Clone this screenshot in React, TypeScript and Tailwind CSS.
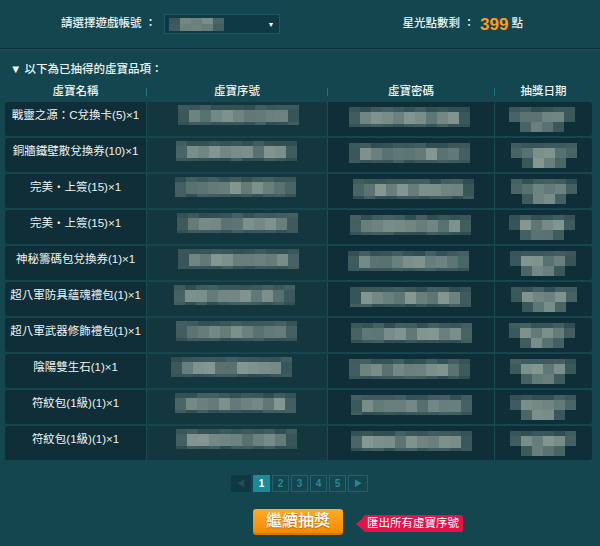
import React from "react";

type MRow = { h: number; n: number; off: number; dim?: boolean };

function Mosaic({ spec, seed, cell = 11 }: { spec: MRow[]; seed: number; cell?: number }) {
  let s = seed * 7919 + 17;
  const rnd = () => {
    s = (s * 9301 + 49297) % 233280;
    return s / 233280;
  };
  const mix = (t: number) => {
    const a = [34, 66, 72];
    const b = [138, 156, 150];
    const c = a.map((v, i) => Math.round(v + (b[i] - v) * t));
    return `rgb(${c[0]},${c[1]},${c[2]})`;
  };
  return (
    <div className="flex flex-col">
      {spec.map((r, i) => (
        <div key={i} className="flex" style={{ height: r.h, marginLeft: r.off * cell }}>
          {Array.from({ length: r.n }).map((_, j) => {
            const edge = j === 0 || j === r.n - 1;
            let t: number;
            if (r.dim) t = 0.12 + rnd() * 0.22;
            else if (edge) t = 0.2 + rnd() * 0.2;
            else t = 0.5 + rnd() * 0.45;
            return <div key={j} style={{ width: cell, background: mix(t) }} />;
          })}
        </div>
      ))}
    </div>
  );
}

const serialSpec: MRow[] = [
  { h: 5, n: 11, off: 0, dim: true },
  { h: 12, n: 11, off: 0 },
  { h: 3, n: 11, off: 0, dim: true },
];

const dateSpec: MRow[] = [
  { h: 5, n: 6, off: 0, dim: true },
  { h: 10, n: 6, off: 0 },
  { h: 10, n: 4, off: 1 },
];

const rows = [
  { name: "戰靈之源：C兌換卡(5)×1", a: 31, b: 21, c: 14 },
  { name: "銅牆鐵壁散兌換券(10)×1", a: 29, b: 21, c: 16 },
  { name: "完美・上簽(15)×1", a: 28, b: 25, c: 16 },
  { name: "完美・上簽(15)×1", a: 30, b: 22, c: 14 },
  { name: "神秘籌碼包兌換券(1)×1", a: 31, b: 20, c: 15 },
  { name: "超八軍防具蘊魂禮包(1)×1", a: 27, b: 22, c: 16 },
  { name: "超八軍武器修飾禮包(1)×1", a: 29, b: 23, c: 14 },
  { name: "陰陽雙生石(1)×1", a: 24, b: 21, c: 15 },
  { name: "符紋包(1級)(1)×1", a: 28, b: 23, c: 15 },
  { name: "符紋包(1級)(1)×1", a: 29, b: 23, c: 15 },
];

export default function App() {
  return (
    <div className="w-[600px] h-[546px] overflow-hidden bg-[#13464f] text-[#eef4f4] font-['Liberation_Sans','Noto_Sans_CJK_TC',sans-serif] pt-[14px]">
      {/* top row */}
      <div className="flex items-center h-[20px] text-[11.5px] font-medium">
        <span className="ml-[61px]">請選擇遊戲帳號</span>
        <span className="ml-[3px] w-[12px] text-center">：</span>
        <div className="ml-[7px] w-[116px] h-[20px] border border-[#1d5863] bg-[#0e3a44] flex items-center pl-[4px]">
          <div className="pt-[1px]">
            <Mosaic spec={[{ h: 6, n: 5, off: 0 }, { h: 7, n: 5, off: 0 }]} seed={3} />
          </div>
          <span className="ml-auto mr-[4px] text-[7px] text-white leading-none">▼</span>
        </div>
        <span className="ml-[123px]">星光點數剩</span>
        <span className="ml-[3px] w-[12px] text-center">：</span>
        <span className="ml-[5px] text-[17px] font-bold text-[#ff9a1c] leading-none">399</span>
        <span className="ml-[3px]">點</span>
      </div>

      {/* divider */}
      <div className="mt-[14px] h-px bg-[#0b2f37]" />
      <div className="h-px bg-[#17505b]" />

      {/* title */}
      <div className="mt-[11px] ml-[10px] text-[11.5px] leading-[16px] font-medium">▼ 以下為已抽得的虛寶品項：</div>

      {/* header */}
      <div className="mt-[6px] ml-[5px] grid grid-cols-[141px_1px_180px_1px_166px_1px_97px] items-center h-[16px] text-[11.5px] font-medium">
        <div className="text-center">虛寶名稱</div>
        <div className="h-[8px] bg-[#1f7682]" />
        <div className="text-center">虛寶序號</div>
        <div className="h-[8px] bg-[#1f7682]" />
        <div className="text-center">虛寶密碼</div>
        <div className="h-[8px] bg-[#1f7682]" />
        <div className="text-center">抽獎日期</div>
      </div>

      {/* rows */}
      <div className="mt-[3px] ml-[5px] w-[587px] flex flex-col gap-[2px]">
        {rows.map((r, i) => (
          <div
            key={i}
            className="grid grid-cols-[141px_181px_167px_98px] h-[34px] rounded-[3px] overflow-hidden"
          >
            <div className="bg-[#0f2e37] text-center text-[11.5px] leading-[16px] pt-[5px]">{r.name}</div>
            <div className="bg-[#13363f] border-l border-[#1b4a53] pt-[3px]" style={{ paddingLeft: r.a }}>
              <Mosaic spec={serialSpec} seed={i * 3 + 1} />
            </div>
            <div className="bg-[#0f2e37] border-l border-[#1b4a53] pt-[5px]" style={{ paddingLeft: r.b }}>
              <Mosaic spec={serialSpec} seed={i * 3 + 2} />
            </div>
            <div className="bg-[#0f2e37] border-l border-[#1b4a53] pt-[5px]" style={{ paddingLeft: r.c }}>
              <Mosaic spec={dateSpec} seed={i * 3 + 5} />
            </div>
          </div>
        ))}
      </div>

      {/* pagination */}
      <div className="mt-[15px] flex justify-center gap-[2px] pr-[1px] text-[10px] font-bold">
        <div className="w-[20px] h-[17px] border border-[#103842] bg-[#0f3942] flex items-center justify-center text-[8px] text-[#2a4c53]">◀</div>
        <div className="w-[17px] h-[17px] bg-[#1a8b99] flex items-center justify-center text-white">1</div>
        {["2", "3", "4", "5"].map((n) => (
          <div key={n} className="w-[17px] h-[17px] border border-[#1b6570] flex items-center justify-center text-[#2a8894]">
            {n}
          </div>
        ))}
        <div className="w-[20px] h-[17px] border border-[#1b6570] flex items-center justify-center text-[8px] text-[#2a8894]">▶</div>
      </div>

      {/* button */}
      <div className="mt-[17px] flex justify-center pr-[4px]">
        <div className="relative">
          <div className="w-[90px] h-[26px] rounded-[3px] bg-gradient-to-b from-[#ffab24] to-[#f28a00] border-b-2 border-[#d47600] flex items-center justify-center text-[16px] text-white font-medium [text-shadow:0_1px_1px_rgba(150,70,0,0.6)]">
            繼續抽獎
          </div>
          <div className="absolute left-[calc(100%+13px)] top-[6px] flex items-center">
            <div className="w-0 h-0 border-y-[6px] border-y-transparent border-r-[7px] border-r-[#e3134a]" />
            <div className="h-[17px] rounded-[3px] bg-[#e3134a] px-[4px] flex items-center text-[11.5px] text-white whitespace-nowrap">
              匯出所有虛寶序號
            </div>
          </div>
        </div>
      </div>
    </div>
  );
}
